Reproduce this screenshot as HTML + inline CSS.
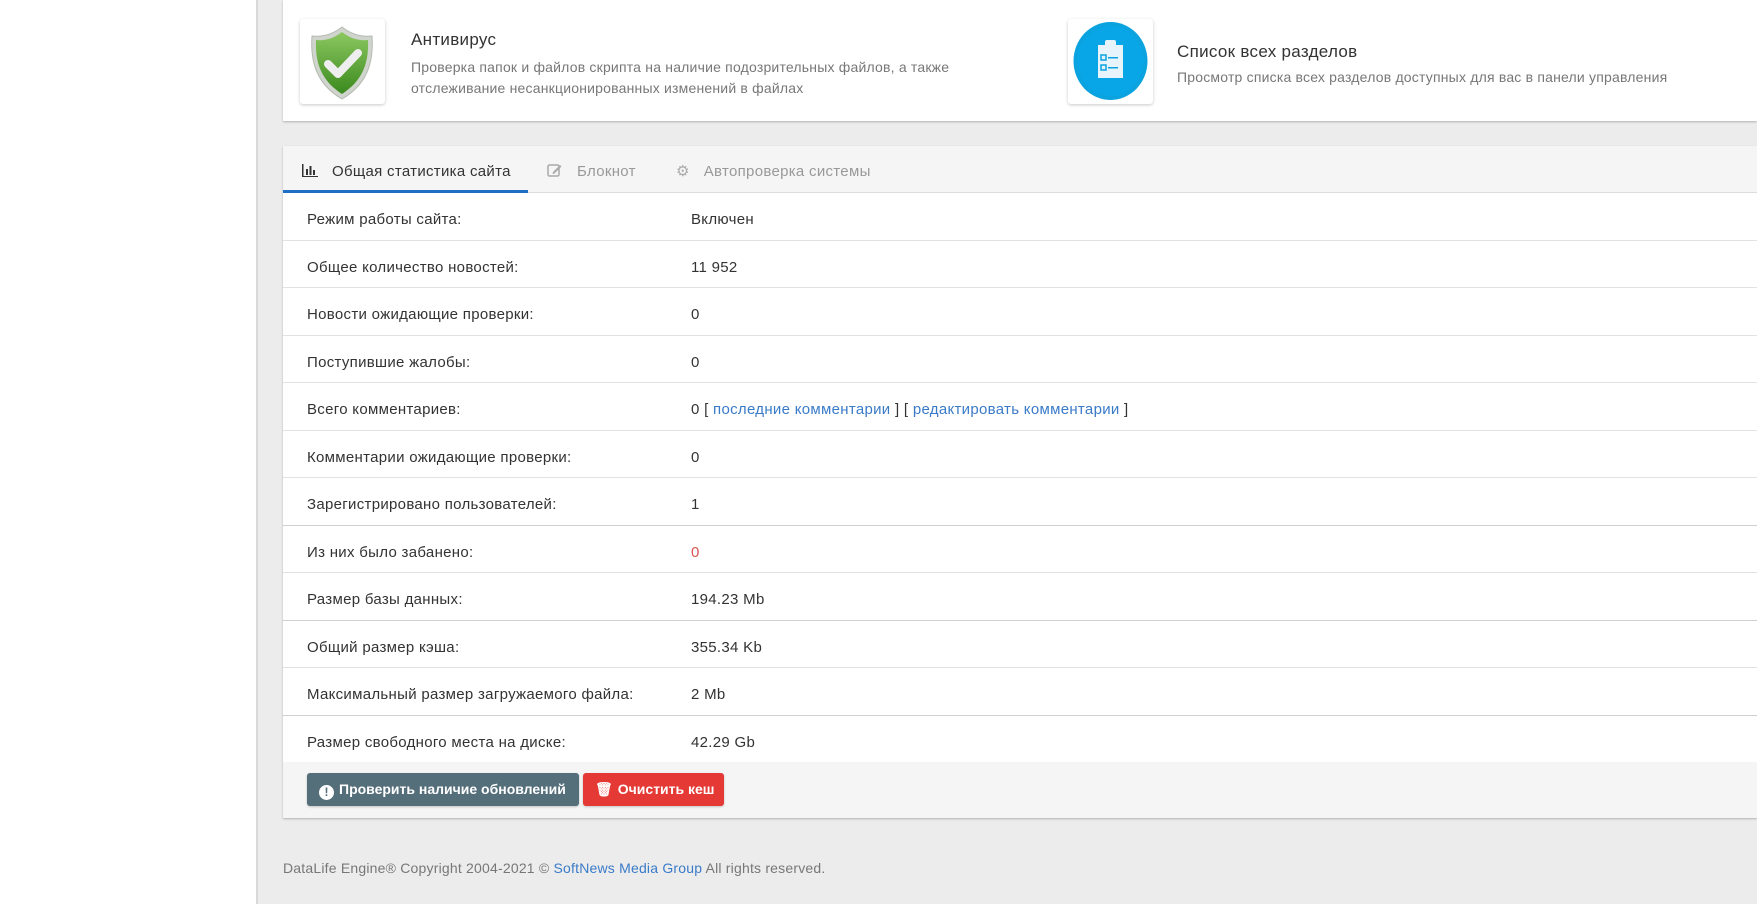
<!DOCTYPE html>
<html><head><meta charset="utf-8"><style>
*{box-sizing:border-box;margin:0;padding:0}
body{width:1757px;height:904px;overflow:hidden;background:#ececec;font-family:"Liberation Sans","DejaVu Sans",sans-serif;color:#333;position:relative}
.side{position:absolute;left:0;top:0;width:258px;height:904px;background:#fff;border-right:2px solid #d9d9d9}
.top{position:absolute;left:283px;top:0;right:0;height:121px;background:#fff;box-shadow:0 1px 2px rgba(0,0,0,.25)}
.ib{position:absolute;width:85px;height:85px;top:19px;background:#fff;border-radius:3px;box-shadow:0 1px 3px rgba(0,0,0,.22)}
.t{position:absolute;font-size:17px;color:#333;letter-spacing:0.3px}
.d{position:absolute;font-size:14px;color:#777;line-height:21px;letter-spacing:0.2px}
.st{position:absolute;left:283px;top:146px;right:0;height:672px;background:#fff;box-shadow:0 1px 2px rgba(0,0,0,.25)}
.hd{height:47px;background:#f5f5f5;border-bottom:1px solid #ddd;position:relative;font-size:15px;letter-spacing:0.3px}
.tab{position:absolute;top:2px;height:47px;line-height:47px;color:#999}
.row{height:47.5px;border-bottom:1px solid #e2e2e2;position:relative;font-size:15px;line-height:54px;letter-spacing:0.3px}
.row .l{position:absolute;left:24px}
.row .v{position:absolute;left:408px}
a{color:#3a7bc8;text-decoration:none}
.ft{position:absolute;left:0;right:0;bottom:0;height:56px;background:#f5f5f5}
.btn{position:absolute;top:11px;height:33px;line-height:33px;color:#fff;font-weight:bold;font-size:14px;border-radius:3px;padding-left:12px;box-shadow:0 1px 2px rgba(0,0,0,.2)}
.foot{position:absolute;left:283px;top:860px;font-size:14px;color:#777;letter-spacing:0.2px}
</style></head><body>
<div class="side"></div>
<div class="top">
 <div class="ib" style="left:17px">
  <svg width="85" height="85" viewBox="0 0 85 85"><defs><linearGradient id="g" x1="0" y1="0" x2="0" y2="1"><stop offset="0" stop-color="#8cc860"/><stop offset="1" stop-color="#3a8a1e"/></linearGradient></defs>
  <path d="M42 8 C52 16 62 18 72 17 C74 45 66 66 42 80 C18 66 10 45 12 17 C22 18 32 16 42 8Z" fill="#cfd4cc" stroke="#b5bab2"/>
  <path d="M42 13 C51 20 60 22 68 21 C69 45 62 62 42 75 C22 62 15 45 16 21 C24 22 33 20 42 13Z" fill="url(#g)"/>
  <path d="M28 45 L38 55 L58 34" fill="none" stroke="#eee" stroke-width="8" stroke-linecap="round" stroke-linejoin="round"/></svg>
 </div>
 <div class="t" style="left:128px;top:30px">Антивирус</div>
 <div class="d" style="left:128px;top:57px">Проверка папок и файлов скрипта на наличие подозрительных файлов, а также<br>отслеживание несанкционированных изменений в файлах</div>
 <div class="ib" style="left:785px">
  <svg width="85" height="85" viewBox="0 0 85 85"><ellipse cx="42.5" cy="42" rx="37" ry="39" fill="#0aa3e0"/><ellipse cx="42.5" cy="42" rx="33" ry="35" fill="#08a6e6"/>
  <rect x="30" y="26" width="25" height="33" fill="#e8f4fb"/><rect x="37" y="21" width="11" height="8" rx="2" fill="#e8f4fb"/>
  <rect x="33" y="36" width="5" height="5" fill="none" stroke="#0aa3e0" stroke-width="1.5"/><rect x="40" y="38" width="10" height="1.5" fill="#0aa3e0"/>
  <rect x="33" y="46" width="5" height="5" fill="none" stroke="#0aa3e0" stroke-width="1.5"/><rect x="40" y="48" width="10" height="1.5" fill="#0aa3e0"/></svg>
 </div>
 <div class="t" style="left:894px;top:42px">Список всех разделов</div>
 <div class="d" style="left:894px;top:67px">Просмотр списка всех разделов доступных для вас в панели управления</div>
</div>
<div class="st">
 <div class="hd">
  <div class="tab" style="left:19px;color:#333"><svg width="16" height="13" style="vertical-align:-1px;margin-right:14px"><rect x="0" y="12" width="16" height="1.5" fill="#333"/><rect x="0" y="0" width="1.5" height="13" fill="#333"/><rect x="4" y="5" width="2" height="6" fill="#333"/><rect x="7.5" y="2" width="2" height="9" fill="#333"/><rect x="11" y="6" width="2" height="5" fill="#333"/></svg>Общая статистика сайта</div>
  <div style="position:absolute;left:0;width:245px;bottom:-1px;height:3px;background:#1e6fc4"></div>
  <div class="tab" style="left:264px"><svg width="15" height="14" style="vertical-align:-1px;margin-right:15px"><rect x="1" y="2" width="11" height="11" rx="1.5" fill="none" stroke="#aaa" stroke-width="1.5"/><path d="M6 9 L13 2 L14.5 3.5 L7.5 10.5 L5.5 11Z" fill="#aaa"/></svg>Блокнот</div>
  <div class="tab" style="left:393px"><span style="margin-right:14px;font-size:15px;color:#aaa">⚙</span>Автопроверка системы</div>
 </div>
 <div class="row"><span class="l">Режим работы сайта:</span><span class="v">Включен</span></div>
 <div class="row"><span class="l">Общее количество новостей:</span><span class="v">11 952</span></div>
 <div class="row"><span class="l">Новости ожидающие проверки:</span><span class="v">0</span></div>
 <div class="row"><span class="l">Поступившие жалобы:</span><span class="v">0</span></div>
 <div class="row"><span class="l">Всего комментариев:</span><span class="v">0 [ <a>последние комментарии</a> ] [ <a>редактировать комментарии</a> ]</span></div>
 <div class="row"><span class="l">Комментарии ожидающие проверки:</span><span class="v">0</span></div>
 <div class="row" style="border-bottom-color:#d0d0d0"><span class="l">Зарегистрировано пользователей:</span><span class="v">1</span></div>
 <div class="row"><span class="l">Из них было забанено:</span><span class="v" style="color:#d9534f">0</span></div>
 <div class="row" style="border-bottom-color:#d0d0d0"><span class="l">Размер базы данных:</span><span class="v">194.23 Mb</span></div>
 <div class="row"><span class="l">Общий размер кэша:</span><span class="v">355.34 Kb</span></div>
 <div class="row" style="border-bottom-color:#d0d0d0"><span class="l">Максимальный размер загружаемого файла:</span><span class="v">2 Mb</span></div>
 <div class="row"><span class="l">Размер свободного места на диске:</span><span class="v">42.29 Gb</span></div>
 <div class="ft">
  <div class="btn" style="left:24px;width:272px;background:#546e7a"><span style="display:inline-block;width:15px;height:15px;border-radius:50%;background:#fff;color:#546e7a;text-align:center;line-height:15px;font-size:12px;margin-right:5px;vertical-align:-2px">!</span>Проверить наличие обновлений</div>
  <div class="btn" style="left:300px;width:141px;background:#e53935"><span style="margin-right:5px">🗑</span>Очистить кеш</div>
 </div>
</div>
<div class="foot">DataLife Engine® Copyright 2004-2021 © <a>SoftNews Media Group</a> All rights reserved.</div>
</body></html>
